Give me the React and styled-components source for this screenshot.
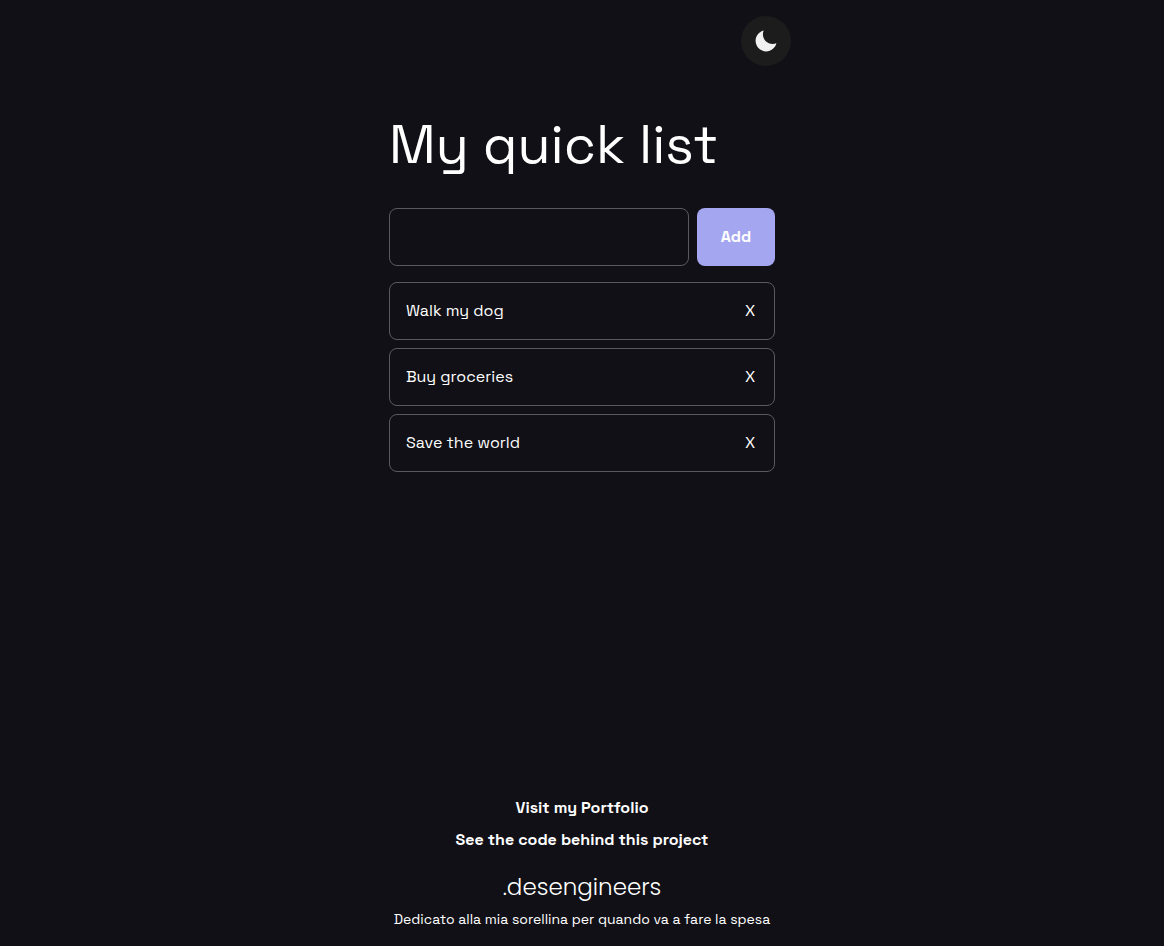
import React, { useState } from "react";
import styled, { createGlobalStyle } from "styled-components";
import { IoMdMoon } from "react-icons/io";

const GlobalStyle = createGlobalStyle`
  *, *::before, *::after { box-sizing: border-box; }
  body {
    margin: 0;
    background: #111016;
    color: #fff;
    font-family: "Space Grotesk", Inter, "Liberation Sans", sans-serif;
    font-size: 16px;
    line-height: 24px;
  }
`;

const Page = styled.div`
  display: flex;
  flex-direction: column;
  align-items: center;
  min-height: 100vh;
  padding: 16px 0;
`;

const Header = styled.header`
  display: flex;
  justify-content: flex-end;
  width: 100%;
  max-width: 418px;
`;

const ThemeToggle = styled.button`
  display: flex;
  align-items: center;
  justify-content: center;
  width: 50px;
  height: 50px;
  padding: 0;
  border: 0;
  border-radius: 50%;
  background: #1c1c1c;
  color: #f1f1f1;
  cursor: pointer;
`;

const Main = styled.main`
  flex: 1;
  width: 100%;
  max-width: 418px;
  padding: 44px 16px 0;
`;

const Title = styled.h1`
  margin: 0 0 28px;
  font-size: 54px;
  font-weight: 400;
  line-height: 70px;
`;

const AddForm = styled.form`
  display: flex;
  gap: 8px;
  margin-bottom: 16px;
`;

const TaskInput = styled.input`
  flex: 1;
  min-width: 0;
  height: 58px;
  padding: 0 16px;
  border: 1px solid #5a5a5e;
  border-radius: 8px;
  background: transparent;
  color: inherit;
  font: inherit;
`;

const AddButton = styled.button`
  width: 78px;
  height: 58px;
  padding: 0;
  border: 0;
  border-radius: 8px;
  background: #a5a6f0;
  color: #fff;
  font: inherit;
  font-weight: 700;
  cursor: pointer;
`;

const TaskList = styled.ul`
  display: flex;
  flex-direction: column;
  gap: 8px;
  margin: 0;
  padding: 0;
  list-style: none;
`;

const Task = styled.li`
  display: flex;
  align-items: center;
  justify-content: space-between;
  height: 58px;
  padding: 0 16px;
  border: 1px solid #5a5a5e;
  border-radius: 8px;
`;

const RemoveButton = styled.button`
  width: 16px;
  padding: 0;
  border: 0;
  background: none;
  color: inherit;
  font: inherit;
  cursor: pointer;
`;

const Footer = styled.footer`
  display: flex;
  flex-direction: column;
  align-items: center;
  gap: 8px;
`;

const FooterLink = styled.a`
  color: inherit;
  font-weight: 600;
  text-decoration: none;
`;

const Brand = styled.a`
  margin-top: 14px;
  color: inherit;
  font-family: Poppins, Inter, sans-serif;
  font-size: 23px;
  font-weight: 300;
  line-height: 26px;
  text-decoration: none;
`;

const Dedication = styled.p`
  margin: 0;
  font-size: 14px;
  line-height: 22px;
`;

export default function App() {
  const [tasks, setTasks] = useState(["Walk my dog", "Buy groceries", "Save the world"]);
  const [draft, setDraft] = useState("");

  const addTask = (event) => {
    event.preventDefault();
    if (!draft.trim()) return;
    setTasks([...tasks, draft.trim()]);
    setDraft("");
  };

  return (
    <Page>
      <GlobalStyle />
      <Header>
        <ThemeToggle type="button" aria-label="Toggle theme">
          <IoMdMoon size={26} />
        </ThemeToggle>
      </Header>
      <Main>
        <Title>My quick list</Title>
        <AddForm onSubmit={addTask}>
          <TaskInput
            aria-label="New item"
            value={draft}
            onChange={(event) => setDraft(event.target.value)}
          />
          <AddButton type="submit">Add</AddButton>
        </AddForm>
        <TaskList>
          {tasks.map((task, index) => (
            <Task key={index}>
              <span>{task}</span>
              <RemoveButton
                type="button"
                aria-label={`Remove ${task}`}
                onClick={() => setTasks(tasks.filter((_, i) => i !== index))}
              >
                X
              </RemoveButton>
            </Task>
          ))}
        </TaskList>
      </Main>
      <Footer>
        <FooterLink href="#portfolio">Visit my Portfolio</FooterLink>
        <FooterLink href="#code">See the code behind this project</FooterLink>
        <Brand href="#desengineers">.desengineers</Brand>
        <Dedication>Dedicato alla mia sorellina per quando va a fare la spesa</Dedication>
      </Footer>
    </Page>
  );
}
